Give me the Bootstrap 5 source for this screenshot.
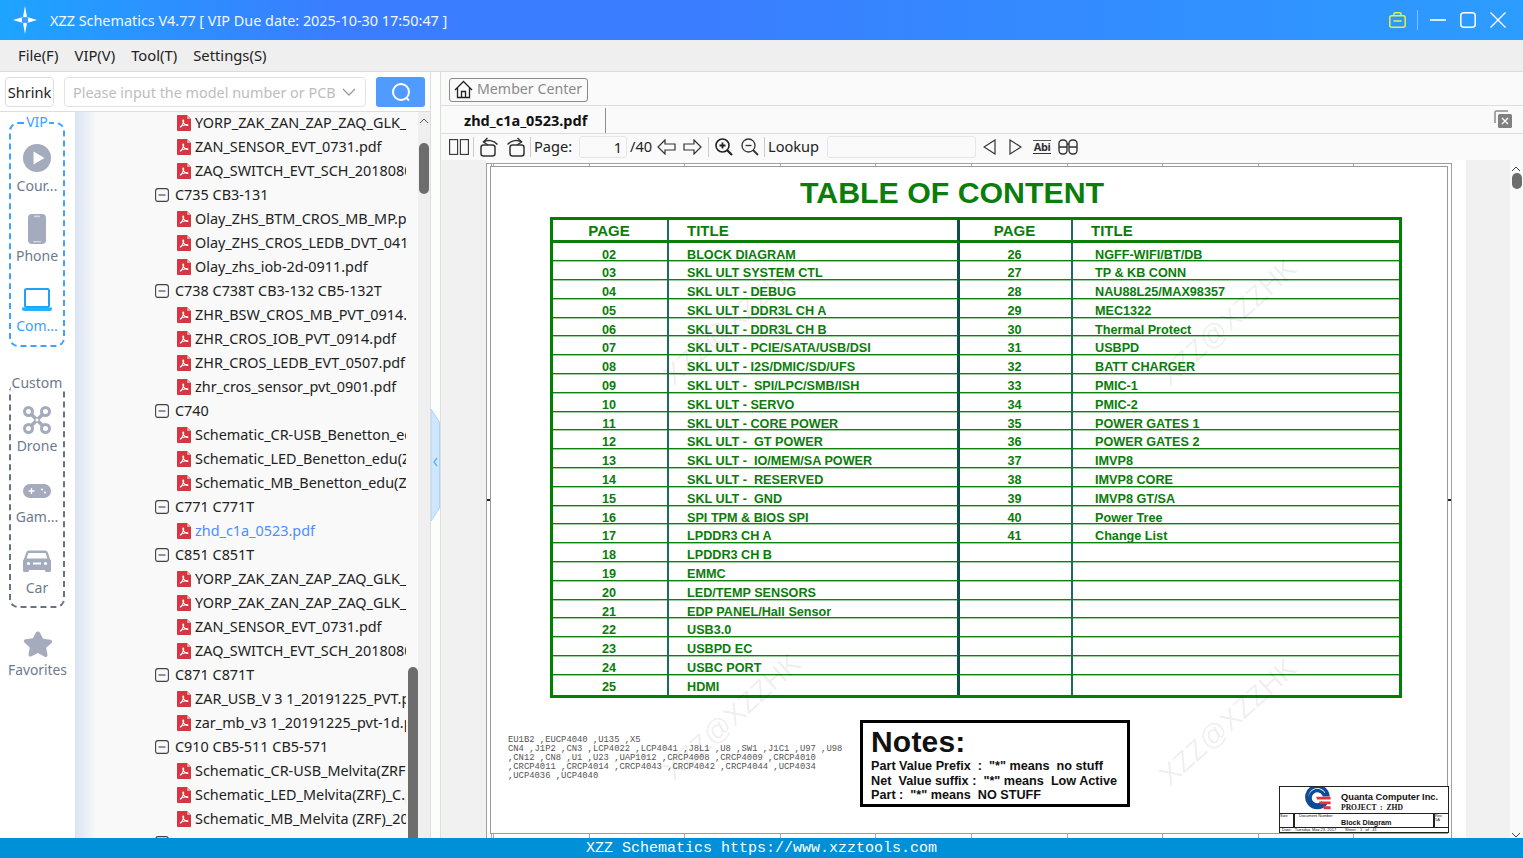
<!DOCTYPE html>
<html lang="en">
<head>
<meta charset="utf-8">
<title>XZZ Schematics</title>
<link href="https://cdn.jsdelivr.net/npm/bootstrap@5.3.0/dist/css/bootstrap.min.css" rel="stylesheet">
<style>
html,body{height:100%;overflow:hidden}
body{font-family:"Noto Sans","Noto Sans CJK SC",sans-serif;font-size:14.4px;color:#222;background:#fff;line-height:1.2}
.shell{width:1523px;height:858px}
.ttlbar{height:40px;flex:none;background:linear-gradient(90deg,#1ea4ff 0,#3a7dff 22%,#3a7dff 45%,#2c9cff 100%);color:#fff}
.ttl-logo{width:30px;height:30px;margin:0 10px 0 10px}
.ttl-text{font-size:14.4px;color:#f2f7ff;padding-top:1px}
.ttl-act{gap:14px;padding-right:17px}
.ttl-sep{width:1px;height:20px;background:#7cc2ff;margin:0 -2px 0 -3px}
.menubar{height:32px;flex:none;background:#efefef;border-bottom:1px solid #dcdcdc;padding:1px 0 0 18px;gap:16px;font-size:14.8px}
.work{height:766px;flex:none}
.leftcol{width:431px;flex:none;border-right:1px solid #ddd}
.seekrow{height:40px;flex:none;border-bottom:1px solid #ddd;padding:5px 5px 4px 5px;background:#fff}
.shrink-btn{width:49px;height:30px;padding:1px 0 0;font-size:14.6px;color:#222;background:#fff;border:1px solid #ddd;border-radius:4px;margin-right:10px}
.seekbox{width:302px;height:30px;border:1px solid #e2e2e2;border-radius:4px;margin-right:10px;padding-right:9px;background:#fff}
.seekbox .form-control{border:0;padding:0 0 0 8px;font-size:14.4px;height:28px;box-shadow:none;background:transparent}
.seekbox .form-control::placeholder{color:#bdbdbd;opacity:1}
.seek-go{width:49px;height:30px;padding:0;background:#4f9bff;border:0;border-radius:3px}
.lower{height:726px;position:relative}
.rail{width:75px;flex:none;background:#fff;padding:10px 10px 0 9px}
.railbox{height:225px;border:2px dashed #3fa2ff;border-radius:9px;position:relative;padding-top:20px}
.railbox.cust{border-color:#6a7180;margin-top:36px}
.railbox-tag{position:absolute;top:-10px;left:50%;transform:translateX(-50%);background:#fff;font-size:14px;color:#3f9dff;line-height:16px;padding:0 1px;white-space:nowrap}
.cust .railbox-tag{color:#6e7687}
.railitem{height:70px;color:#6e7a8e;font-size:14px;line-height:18px;text-align:center;white-space:nowrap}
.railitem svg{display:block;margin:0 auto 5px}
.railitem.on{color:#3f9dff}
.cust .railitem svg{margin:1px auto 3px}
.railitem .phone-ic{margin:0 auto 3px}
.railitem .lap-ic{margin:4px auto 5px}
.railitem .star-ic{margin:0 auto 3px}
.railfav{margin:22px -10px 0 -9px;height:70px;font-size:13.8px}
.treewrap{width:343px;flex:none;background:linear-gradient(90deg,#dbe4f4 0,#f9f9f9 22px);overflow:hidden}
.treescroll{width:12px;flex:none;background:#efefef}
.trow{height:24px;display:flex;align-items:center;line-height:24px;white-space:nowrap}
.trow.grp{padding-left:80px}
.trow.fil{padding-left:102px}
.trow.first{margin-top:-1px}
.trow svg{flex:none}
.trow.grp svg{margin-right:6px}
.trow.fil svg{margin-right:4px}
.tname{width:211px;overflow:hidden}
.tname.hit{color:#4d8dff}
.sb-thumb{position:absolute;width:10px;border-radius:5px;background:#6d6d6d}
.sb-a{left:419px;top:31px;height:51px}
.sb-b{left:408px;top:555px;height:171px;border-radius:5px 5px 0 0}
.sb-c{left:2px;top:13px;height:16px}
.sb-up{position:absolute;left:419px;top:6px}
.splitbar{flex:none;background:#fbfefb;position:relative;border-right:1px solid #ddd;width:10px}
.split-hdl{position:absolute;left:0;top:337px}
.rightcol{width:1082px;flex:none;background:#fafafa}
.memrow{height:34px;flex:none;border-bottom:1px solid #ddd;padding:6px 0 0 8px}
.mem-btn{height:24px;width:139px;padding:0 0 2px 4px;border:1px solid #8a8a8a;border-radius:3px;color:#8a8a8a;font-size:14.2px;background:#fafafa;line-height:20px;white-space:nowrap}
.tabrow{height:28px;flex:none;border-bottom:1px solid #ddd;position:relative}
.tabitem{width:165px;height:25px;margin-top:2px;border-right:1px solid #8e8e8e;padding-left:23px;font-weight:700;font-size:14.5px;line-height:24px;color:#111}
.tab-x{margin:0 11px 0 auto}
.toolrow{height:26px;flex:none;padding-left:8px;font-size:14.6px}
.tsep{width:1px;height:20px;background:#ccc}
.tfield{height:22px;border:1px solid #e6e6e6;border-radius:3px;background:#fafafa;text-align:right;padding-right:4px;line-height:20px}
.abi-ic{margin-left:11px;width:18px;border-top:1px solid #555;border-bottom:1px solid #333;font-size:11px;line-height:12px;color:#333;text-align:center;font-weight:700;letter-spacing:-.5px}
.viewarea{height:678px;flex:none;background:#f1f1f1}
.sheetscroll{width:13px;flex:none;background:#fafafa;position:relative}
.sheet{width:980px;height:678px;margin:0 44px 0 45px;background:#fff;padding-top:3px;overflow:hidden;flex:none}
.frm-o{width:966px;height:680px;border:solid #a0a0a0;border-width:1px 1px 0 1px;padding:0 3px;background:#fff}
.tick-t{height:2px;background:repeating-linear-gradient(90deg,#a8a8a8 0 1px,transparent 1px 95.6px) 3px 0}
.tick-b{height:6px;background:repeating-linear-gradient(90deg,#a8a8a8 0 1px,transparent 1px 95.6px) 3px 0}
.frm-i{height:668px;border:1px solid #9a9a9a;position:relative;background:#fff;font-family:"Liberation Sans",Arial,sans-serif}
.edge-mk{position:absolute;top:332px;width:3px;height:2px;background:#222}
.edge-l{left:-4px}
.edge-r{right:-4px}
.wmk{position:absolute;transform:translate(-50%,-50%) rotate(-42deg);font-size:28px;color:rgba(0,0,0,.07);white-space:nowrap;line-height:1;pointer-events:none}
.toc-head{height:50px;margin-left:309px;font-size:30.3px;font-weight:700;color:#0a7d0a;line-height:52px;white-space:nowrap}
.toc{margin-left:59px;width:852px;border:3px solid #008000;display:grid;grid-template-columns:116px 291px 113px 326px;grid-template-rows:22.5px repeat(23,18.8px) 20.5px;color:#0a7d0a;font-weight:700;font-size:12.65px}
.toc>div{border-bottom:1px solid #0c820c;box-shadow:0 1px 0 rgba(12,130,12,.4);line-height:24px;white-space:pre;border-right:2px solid #1f6a5c;min-height:0}
.toc>div:nth-child(4n+2){border-right:3px solid #0f4f4a}
.toc>div:nth-child(4n){border-right:0}
.toc>div:nth-child(n+97){border-bottom:0;box-shadow:none}
.toc>.th{font-size:15px;line-height:22px;border-bottom:3px solid #0a7d0a;box-shadow:none}
.cn{text-align:center;padding-right:2px}
.t1{padding-left:18px}
.t2{padding-left:22px}
.toc>.t2h{padding-left:18px}
.sheetfoot{height:113px;margin-top:22px}
.partlist{width:369px;padding:16px 0 0 17px;margin:0;font-family:"Liberation Mono","DejaVu Sans Mono",monospace;font-size:8.85px;line-height:9px;color:#555;white-space:pre;flex:none;background:transparent;overflow:visible}
.notebox{width:270px;height:87px;border:3px solid #000;padding:2px 0 0 8px;color:#111;font-weight:700;font-size:12.65px;line-height:14.3px;white-space:pre;flex:none}
.notebox-h{font-size:30px;line-height:34px;letter-spacing:.2px}
.titleblk{width:170px;height:47px;border:1px solid #222;margin:auto -2px 0 auto;font-size:8px;color:#111;flex:none;background:#fff;line-height:1}
.tb-top{height:27px;border-bottom:1px solid #222;padding-left:20px}
.tb-co{font-weight:700;font-size:9.3px;line-height:12px;padding-top:4px;white-space:nowrap}
.tb-prj{font-family:"Liberation Serif",serif;font-weight:700;font-size:7.6px;line-height:10px;white-space:pre}
.tb-mid{height:14px;border-bottom:1px solid #222}
.tb-sz{width:15px;border-right:2px solid #222;font-size:4px}
.tb-doc{flex:1;font-size:4px;padding-left:4px;position:relative}
.tb-doc b{display:block;font-size:7.2px;margin:1px 0 0 42px}
.tb-rev{width:15px;border-left:2px solid #222;font-size:4px}
.tb-bot{font-size:4px;height:3px;white-space:pre;overflow:hidden;padding-left:2px}
.statusbar{height:20px;flex:none;background:#0090d8;color:#fff;font-family:"Liberation Mono","DejaVu Sans Mono",monospace;font-size:15px;line-height:21px;text-align:center}
</style>
</head>
<body>
<svg width="0" height="0" class="position-absolute">
<symbol id="pdf" viewBox="0 0 14 16"><path d="M1 0h9l4 4v11a1 1 0 0 1-1 1H1a1 1 0 0 1-1-1V1a1 1 0 0 1 1-1z" fill="#d8363e"/><path d="M10 0l4 4h-3.200a.8.8 0 0 1-.8-.8z" fill="#f0a0a4"/><path d="M3 12.300c1.500-.8 2.800-2.800 3.500-5.200.2-1 .2-2-.3-2-.5 0-.5 1.200 0 2.200.7 1.300 2 2.600 3.200 3 .9.300 1.600.1 1.500-.3-.1-.4-1.200-.5-2.400-.3-2 .3-4 1.100-5.500 2.600z" fill="none" stroke="#fff" stroke-width="1.100"/></symbol>
<symbol id="grpbox" viewBox="0 0 14 14"><rect x=".6" y=".6" width="12.800" height="12.800" rx="2.500" fill="none" stroke="#3f4248" stroke-width="1.100"/><path d="M3.500 7h7" stroke="#3f4248" stroke-width="1.100"/></symbol>
</svg>
<div class="shell d-flex flex-column">
  <div class="ttlbar d-flex align-items-center">
    <svg class="ttl-logo" viewBox="0 0 30 30"><path d="M15 1l2 11 10 3-10 3-2 11-2-11-10-3 10-3z" fill="#fff"/><circle cx="15" cy="15" r="3.500" fill="#3a9dff"/><circle cx="11" cy="15" r="1.200" fill="#fff"/><circle cx="19" cy="15" r="1.200" fill="#fff"/><circle cx="15" cy="11" r="1.200" fill="#fff"/><circle cx="15" cy="19" r="1.200" fill="#fff"/></svg>
    <span class="ttl-text">XZZ Schematics V4.77 [ VIP Due date: 2025-10-30 17:50:47 ]</span>
    <div class="ttl-act d-flex align-items-center ms-auto">
      <svg width="17" height="16" viewBox="0 0 17 16" fill="none" stroke="#e3ef4a" stroke-width="1.500"><rect x=".8" y="3.700" width="15.400" height="11.500" rx="2"/><path d="M5 3.500V2a1.200 1.200 0 0 1 1.200-1.200h4.600A1.200 1.200 0 0 1 12 2v1.500M4.500 9h8"/></svg>
      <span class="ttl-sep"></span>
      <svg width="16" height="16" viewBox="0 0 16 16"><path d="M0 8h16" stroke="#fff" stroke-width="1.600"/></svg>
      <svg width="16" height="16" viewBox="0 0 16 16" fill="none"><rect x=".8" y=".8" width="14.400" height="14.400" rx="3" stroke="#fff" stroke-width="1.500"/></svg>
      <svg width="16" height="16" viewBox="0 0 16 16"><path d="M.5.500l15 15M15.500.500l-15 15" stroke="#fff" stroke-width="1.400"/></svg>
    </div>
  </div>
  <div class="menubar d-flex align-items-center"><span>File(F)</span><span>VIP(V)</span><span>Tool(T)</span><span>Settings(S)</span></div>
  <div class="work d-flex">
    <div class="leftcol d-flex flex-column">
      <div class="seekrow d-flex align-items-start">
        <button class="btn shrink-btn" type="button">Shrink</button>
        <div class="seekbox d-flex align-items-center">
          <input class="form-control" type="text" placeholder="Please input the model number or PCB">
          <svg class="flex-shrink-0" width="14" height="8" viewBox="0 0 14 8"><path d="M1 1l6 6 6-6" fill="none" stroke="#9a9a9a" stroke-width="1.300"/></svg>
        </div>
        <button class="btn seek-go d-flex align-items-center justify-content-center" type="button" aria-label="Search"><svg width="22" height="22" viewBox="0 0 22 22" fill="none" stroke="#fff" stroke-width="2"><circle cx="11" cy="11" r="8"/><path d="M16.500 17l2.500 2.500"/></svg></button>
      </div>
      <div class="lower d-flex">
        <div class="rail">
          <div class="railbox">
            <span class="railbox-tag">VIP</span>
            <div class="railitem"><svg width="28" height="28" viewBox="0 0 28 28"><circle cx="14" cy="14" r="14" fill="#a4abbd"/><path d="M10.500 7.500l11 6.500-11 6.500z" fill="#fff"/></svg>Cour...</div>
            <div class="railitem"><svg class="phone-ic" width="18" height="30" viewBox="0 0 18 30"><rect width="18" height="30" rx="4" fill="#a4abbd"/><rect x="6" y="1.500" width="6" height="1.800" rx=".9" fill="#d4d8e2"/><rect x="5" y="27" width="8" height="1.300" fill="#d4d8e2"/></svg>Phone</div>
            <div class="railitem on"><svg class="lap-ic" width="30" height="24" viewBox="0 0 30 24"><rect x="3" y="1" width="24" height="18" rx="1.500" fill="none" stroke="#21a0f8" stroke-width="2"/><path d="M0 19.500h30v1.500a2 2 0 0 1-2 2H2a2 2 0 0 1-2-2z" fill="#21b4ff"/></svg>Com...</div>
          </div>
          <div class="railbox cust">
            <span class="railbox-tag">Custom</span>
            <div class="railitem"><svg width="28" height="28" viewBox="0 0 28 28" fill="none" stroke="#a4abbd"><circle cx="5.500" cy="5.500" r="4" stroke-width="3"/><circle cx="22.500" cy="5.500" r="4" stroke-width="3"/><circle cx="5.500" cy="22.500" r="4" stroke-width="3"/><circle cx="22.500" cy="22.500" r="4" stroke-width="3"/><path d="M8 8l12 12M20 8L8 20" stroke-width="3.500"/><circle cx="14" cy="14" r="2" fill="#fff" stroke-width="1"/></svg>Drone</div>
            <div class="railitem"><svg width="28" height="28" viewBox="0 0 28 28"><rect y="7" width="28" height="14" rx="7" fill="#a4abbd"/><path d="M5.500 14h6M8.500 11v6" stroke="#fff" stroke-width="1.300"/><circle cx="19" cy="12.500" r="1" fill="#fff"/><circle cx="22" cy="15.500" r="1" fill="#fff"/></svg>Gam...</div>
            <div class="railitem"><svg width="28" height="28" viewBox="0 0 28 28"><path d="M6 2.500h16a3 3 0 0 1 2.800 2L27 11a3 3 0 0 1 1 2v9.500a1.500 1.500 0 0 1-1.500 1.500h-3a1.500 1.500 0 0 1-1.500-1.500V22H6v.5A1.500 1.500 0 0 1 4.500 24h-3A1.500 1.500 0 0 1 0 22.500V13a3 3 0 0 1 1-2l2.200-6.500a3 3 0 0 1 2.800-2z" fill="#a4abbd"/><path d="M5.500 5h17l2 5.500h-21z" fill="#fff"/><circle cx="5.500" cy="15.500" r="1.600" fill="#fff"/><circle cx="22.500" cy="15.500" r="1.600" fill="#fff"/><rect x="10" y="14.500" width="8" height="2" fill="#fff"/></svg>Car</div>
          </div>
          <div class="railitem railfav"><svg class="star-ic" width="30" height="28" viewBox="0 0 30 28"><path d="M15 1.500a2 2 0 0 1 1.800 1.100l3.300 6.800 7.400 1a2 2 0 0 1 1.100 3.400l-5.400 5.200 1.300 7.400a2 2 0 0 1-2.900 2.100L15 24.500l-6.600 3.500a2 2 0 0 1-2.900-2.100l1.300-7.400-5.400-5.200a2 2 0 0 1 1.100-3.400l7.400-1 3.300-6.800A2 2 0 0 1 15 1.500z" fill="#a4abbd" transform="scale(1 .94)"/></svg>Favorites</div>
        </div>
        <div class="treewrap">
          <div class="trow fil first"><svg width="14" height="16"><use href="#pdf"/></svg><div class="tname">YORP_ZAK_ZAN_ZAP_ZAQ_GLK_MB.pdf</div></div>
          <div class="trow fil"><svg width="14" height="16"><use href="#pdf"/></svg><div class="tname">ZAN_SENSOR_EVT_0731.pdf</div></div>
          <div class="trow fil"><svg width="14" height="16"><use href="#pdf"/></svg><div class="tname">ZAQ_SWITCH_EVT_SCH_20180806.pdf</div></div>
          <div class="trow grp"><svg width="14" height="14"><use href="#grpbox"/></svg><div>C735 CB3-131</div></div>
          <div class="trow fil"><svg width="14" height="16"><use href="#pdf"/></svg><div class="tname">Olay_ZHS_BTM_CROS_MB_MP.pdf</div></div>
          <div class="trow fil"><svg width="14" height="16"><use href="#pdf"/></svg><div class="tname">Olay_ZHS_CROS_LEDB_DVT_0412.pdf</div></div>
          <div class="trow fil"><svg width="14" height="16"><use href="#pdf"/></svg><div class="tname">Olay_zhs_iob-2d-0911.pdf</div></div>
          <div class="trow grp"><svg width="14" height="14"><use href="#grpbox"/></svg><div>C738 C738T CB3-132 CB5-132T</div></div>
          <div class="trow fil"><svg width="14" height="16"><use href="#pdf"/></svg><div class="tname">ZHR_BSW_CROS_MB_PVT_0914.pdf</div></div>
          <div class="trow fil"><svg width="14" height="16"><use href="#pdf"/></svg><div class="tname">ZHR_CROS_IOB_PVT_0914.pdf</div></div>
          <div class="trow fil"><svg width="14" height="16"><use href="#pdf"/></svg><div class="tname">ZHR_CROS_LEDB_EVT_0507.pdf</div></div>
          <div class="trow fil"><svg width="14" height="16"><use href="#pdf"/></svg><div class="tname">zhr_cros_sensor_pvt_0901.pdf</div></div>
          <div class="trow grp"><svg width="14" height="14"><use href="#grpbox"/></svg><div>C740</div></div>
          <div class="trow fil"><svg width="14" height="16"><use href="#pdf"/></svg><div class="tname">Schematic_CR-USB_Benetton_edu(ZRF).pdf</div></div>
          <div class="trow fil"><svg width="14" height="16"><use href="#pdf"/></svg><div class="tname">Schematic_LED_Benetton_edu(ZRF).pdf</div></div>
          <div class="trow fil"><svg width="14" height="16"><use href="#pdf"/></svg><div class="tname">Schematic_MB_Benetton_edu(ZRF).pdf</div></div>
          <div class="trow grp"><svg width="14" height="14"><use href="#grpbox"/></svg><div>C771 C771T</div></div>
          <div class="trow fil"><svg width="14" height="16"><use href="#pdf"/></svg><div class="tname hit">zhd_c1a_0523.pdf</div></div>
          <div class="trow grp"><svg width="14" height="14"><use href="#grpbox"/></svg><div>C851 C851T</div></div>
          <div class="trow fil"><svg width="14" height="16"><use href="#pdf"/></svg><div class="tname">YORP_ZAK_ZAN_ZAP_ZAQ_GLK_MB.pdf</div></div>
          <div class="trow fil"><svg width="14" height="16"><use href="#pdf"/></svg><div class="tname">YORP_ZAK_ZAN_ZAP_ZAQ_GLK_IO.pdf</div></div>
          <div class="trow fil"><svg width="14" height="16"><use href="#pdf"/></svg><div class="tname">ZAN_SENSOR_EVT_0731.pdf</div></div>
          <div class="trow fil"><svg width="14" height="16"><use href="#pdf"/></svg><div class="tname">ZAQ_SWITCH_EVT_SCH_20180806.pdf</div></div>
          <div class="trow grp"><svg width="14" height="14"><use href="#grpbox"/></svg><div>C871 C871T</div></div>
          <div class="trow fil"><svg width="14" height="16"><use href="#pdf"/></svg><div class="tname">ZAR_USB_V 3 1_20191225_PVT.pdf</div></div>
          <div class="trow fil"><svg width="14" height="16"><use href="#pdf"/></svg><div class="tname">zar_mb_v3 1_20191225_pvt-1d.pdf</div></div>
          <div class="trow grp"><svg width="14" height="14"><use href="#grpbox"/></svg><div>C910 CB5-511 CB5-571</div></div>
          <div class="trow fil"><svg width="14" height="16"><use href="#pdf"/></svg><div class="tname">Schematic_CR-USB_Melvita(ZRF).pdf</div></div>
          <div class="trow fil"><svg width="14" height="16"><use href="#pdf"/></svg><div class="tname">Schematic_LED_Melvita(ZRF)_C.pdf</div></div>
          <div class="trow fil"><svg width="14" height="16"><use href="#pdf"/></svg><div class="tname">Schematic_MB_Melvita (ZRF)_2017.pdf</div></div>
          <div class="trow grp"><svg width="14" height="14"><use href="#grpbox"/></svg><div>C930 CB5-471</div></div>
        </div>
        <div class="treescroll"></div>
        <svg class="sb-up" width="10" height="6" viewBox="0 0 10 6"><path d="M1 5l4-4 4 4" fill="none" stroke="#555" stroke-width="1"/></svg>
        <div class="sb-thumb sb-a"></div>
        <div class="sb-thumb sb-b"></div>
      </div>
    </div>
    <div class="splitbar"><svg class="split-hdl" width="9" height="112" viewBox="0 0 9 112"><path d="M0 0l8.500 13v86L0 112z" fill="#cfe6ff" stroke="#a8d3ff" stroke-width="1"/><path d="M6 49l-3 4 3 4" fill="none" stroke="#62aefc" stroke-width="1.300"/></svg></div>
    <div class="rightcol d-flex flex-column">
      <div class="memrow"><button class="btn mem-btn d-flex align-items-center gap-1" type="button"><svg class="flex-shrink-0" width="19" height="19" viewBox="0 0 19 19" fill="none" stroke="#222" stroke-width="1.300"><path d="M1 10L9.500 1.500 18 10M3.500 8v9.500h12V8M7.500 17.500v-6h4v6"/></svg>Member Center</button></div>
      <div class="tabrow d-flex align-items-start">
        <div class="tabitem">zhd_c1a_0523.pdf</div>
        <svg class="tab-x mt-1" width="18" height="18" viewBox="0 0 18 18"><path d="M1 13V2.500A1.500 1.500 0 0 1 2.500 1H14" fill="none" stroke="#8a8a8a" stroke-width="1.500"/><rect x="4" y="4" width="14" height="14" rx="1.500" fill="#808080"/><path d="M8 8l6 6M14 8l-6 6" stroke="#fff" stroke-width="1.400"/></svg>
      </div>
      <div class="toolrow d-flex align-items-center">
        <svg width="20" height="16" viewBox="0 0 20 16" fill="none" stroke="#333" stroke-width="1.100"><rect x=".6" y=".6" width="8" height="14.800"/><rect x="11.400" y=".6" width="8" height="14.800"/></svg>
        <span class="tsep ms-1" style="margin-right:6px"></span>
        <svg width="19" height="20" viewBox="0 0 19 20" fill="none" stroke="#333" stroke-width="1.500"><rect x="1" y="8" width="14" height="11" rx="2.500"/><path d="M3.500 5C7.500 2.500 13.500 3 17.500 7.500"/><path d="M7.500 1L3.500 5l4.500 3"/></svg>
        <svg style="margin-left:7px" width="19" height="20" viewBox="0 0 19 20" fill="none" stroke="#333" stroke-width="1.500"><rect x="4" y="8" width="14" height="11" rx="2.500"/><path d="M15.500 5C11.500 2.500 5.500 3 1.500 7.500"/><path d="M11.500 1l4 4-4.500 3"/></svg>
        <span class="tsep" style="margin:0 3px 0 5px"></span>
        <span style="width:45px">Page:</span>
        <div class="tfield" style="width:48px">1</div>
        <span style="width:27px;padding-left:3px">/40</span>
        <svg style="margin-left:3px" width="19" height="16" viewBox="0 0 19 16" fill="none" stroke="#333" stroke-width="1.200"><path d="M8 1L1 8l7 7v-4h10V5H8z"/></svg>
        <svg style="margin-left:7px" width="19" height="16" viewBox="0 0 19 16" fill="none" stroke="#333" stroke-width="1.200"><path d="M11 1l7 7-7 7v-4H1V5h10z"/></svg>
        <span class="tsep" style="margin:0 6px 0 6px"></span>
        <svg width="18" height="18" viewBox="0 0 18 18" fill="none" stroke="#222" stroke-width="1.600"><circle cx="7.500" cy="7.500" r="6.500"/><path d="M12 12l5 5" stroke-width="2.200"/><path d="M4.500 7.500h6M7.500 4.500v6" stroke-width="1.800"/></svg>
        <svg style="margin-left:8px" width="18" height="18" viewBox="0 0 18 18" fill="none" stroke="#333" stroke-width="1.300"><circle cx="7.500" cy="7.500" r="6.500"/><path d="M12 12l5 5" stroke-width="1.800"/><path d="M4.500 7.500h6"/></svg>
        <span class="tsep" style="margin:0 3px 0 5px"></span>
        <span style="width:59px">Lookup</span>
        <div class="tfield" style="width:149px"></div>
        <svg style="margin-left:7px" width="13" height="16" viewBox="0 0 13 16" fill="none" stroke="#333" stroke-width="1.200"><path d="M12 1L1 8l11 7z"/></svg>
        <svg style="margin-left:13px" width="13" height="16" viewBox="0 0 13 16" fill="none" stroke="#333" stroke-width="1.200"><path d="M1 1l11 7-11 7z"/></svg>
        <span class="abi-ic">Abi</span>
        <svg style="margin-left:7px" width="20" height="16" viewBox="0 0 20 16" fill="none" stroke="#333" stroke-width="1.400"><rect x="1" y="1" width="8" height="14" rx="3.500"/><rect x="11" y="1" width="8" height="14" rx="3.500"/><path d="M1 8h8M11 8h8M9 5h2"/></svg>
      </div>
      <div class="viewarea d-flex">
        <div class="flex-grow-1 d-flex" style="min-width:0">
          <div class="sheet">
            <div class="frm-o">
              <div class="tick-t"></div>
              <div class="frm-i">
                <span class="edge-mk edge-l"></span><span class="edge-mk edge-r"></span>
                <span class="wmk" style="left:241px;top:155px">XZZ@XZZHK</span>
                <span class="wmk" style="left:737px;top:155px">XZZ@XZZHK</span>
                <span class="wmk" style="left:241px;top:550px">XZZ@XZZHK</span>
                <span class="wmk" style="left:737px;top:555px">XZZ@XZZHK</span>
                <div class="toc-head">TABLE OF CONTENT</div>
                <div class="toc">
                  <div class="th cn">PAGE</div><div class="th t1">TITLE</div><div class="th cn">PAGE</div><div class="th t2h">TITLE</div>
                  <div class="cn">02</div><div class="t1">BLOCK DIAGRAM</div><div class="cn">26</div><div class="t2">NGFF-WIFI/BT/DB</div>
                  <div class="cn">03</div><div class="t1">SKL ULT SYSTEM CTL</div><div class="cn">27</div><div class="t2">TP &amp; KB CONN</div>
                  <div class="cn">04</div><div class="t1">SKL ULT - DEBUG</div><div class="cn">28</div><div class="t2">NAU88L25/MAX98357</div>
                  <div class="cn">05</div><div class="t1">SKL ULT - DDR3L CH A</div><div class="cn">29</div><div class="t2">MEC1322</div>
                  <div class="cn">06</div><div class="t1">SKL ULT - DDR3L CH B</div><div class="cn">30</div><div class="t2">Thermal Protect</div>
                  <div class="cn">07</div><div class="t1">SKL ULT - PCIE/SATA/USB/DSI</div><div class="cn">31</div><div class="t2">USBPD</div>
                  <div class="cn">08</div><div class="t1">SKL ULT - I2S/DMIC/SD/UFS</div><div class="cn">32</div><div class="t2">BATT CHARGER</div>
                  <div class="cn">09</div><div class="t1">SKL ULT -  SPI/LPC/SMB/ISH</div><div class="cn">33</div><div class="t2">PMIC-1</div>
                  <div class="cn">10</div><div class="t1">SKL ULT - SERVO</div><div class="cn">34</div><div class="t2">PMIC-2</div>
                  <div class="cn">11</div><div class="t1">SKL ULT - CORE POWER</div><div class="cn">35</div><div class="t2">POWER GATES 1</div>
                  <div class="cn">12</div><div class="t1">SKL ULT -  GT POWER</div><div class="cn">36</div><div class="t2">POWER GATES 2</div>
                  <div class="cn">13</div><div class="t1">SKL ULT -  IO/MEM/SA POWER</div><div class="cn">37</div><div class="t2">IMVP8</div>
                  <div class="cn">14</div><div class="t1">SKL ULT -  RESERVED</div><div class="cn">38</div><div class="t2">IMVP8 CORE</div>
                  <div class="cn">15</div><div class="t1">SKL ULT -  GND</div><div class="cn">39</div><div class="t2">IMVP8 GT/SA</div>
                  <div class="cn">16</div><div class="t1">SPI TPM &amp; BIOS SPI</div><div class="cn">40</div><div class="t2">Power Tree</div>
                  <div class="cn">17</div><div class="t1">LPDDR3 CH A</div><div class="cn">41</div><div class="t2">Change List</div>
                  <div class="cn">18</div><div class="t1">LPDDR3 CH B</div><div class="cn"></div><div class="t2"></div>
                  <div class="cn">19</div><div class="t1">EMMC</div><div class="cn"></div><div class="t2"></div>
                  <div class="cn">20</div><div class="t1">LED/TEMP SENSORS</div><div class="cn"></div><div class="t2"></div>
                  <div class="cn">21</div><div class="t1">EDP PANEL/Hall Sensor</div><div class="cn"></div><div class="t2"></div>
                  <div class="cn">22</div><div class="t1">USB3.0</div><div class="cn"></div><div class="t2"></div>
                  <div class="cn">23</div><div class="t1">USBPD EC</div><div class="cn"></div><div class="t2"></div>
                  <div class="cn">24</div><div class="t1">USBC PORT</div><div class="cn"></div><div class="t2"></div>
                  <div class="cn">25</div><div class="t1">HDMI</div><div class="cn"></div><div class="t2"></div>
                </div>
                <div class="sheetfoot d-flex">
                  <pre class="partlist">EU1B2 ,EUCP4040 ,U135 ,X5
CN4 ,J1P2 ,CN3 ,LCP4022 ,LCP4041 ,J8L1 ,U8 ,SW1 ,J1C1 ,U97 ,U98
,CN12 ,CN8 ,U1 ,U23 ,UAP1012 ,CRCP4008 ,CRCP4009 ,CRCP4010
,CRCP4011 ,CRCP4014 ,CRCP4043 ,CRCP4042 ,CRCP4044 ,UCP4034
,UCP4036 ,UCP4040</pre>
                  <div class="notebox"><div class="notebox-h">Notes:</div>Part Value Prefix  :  "*" means  no stuff
Net  Value suffix :  "*" means  Low Active
Part :  "*" means  NO STUFF</div>
                  <div class="titleblk">
                    <div class="tb-top d-flex">
                      <svg class="flex-shrink-0" width="41" height="26" viewBox="0 0 41 27"><path d="M26 17a11 11 0 1 1 2-9h-4a7.500 7.500 0 1 0-1 8" fill="none" stroke="#0f4a96" stroke-width="3.500"/><path d="M16 10h15v3H17zM19 15h12v3H20zM23 20h8v3h-7z" fill="#e0353f"/></svg>
                      <div><div class="tb-co">Quanta Computer Inc.</div><div class="tb-prj">PROJECT  :  ZHD</div></div>
                    </div>
                    <div class="tb-mid d-flex"><div class="tb-sz">Size</div><div class="tb-doc">Document Number<b>Block Diagram</b></div><div class="tb-rev">Rev<br>5A</div></div>
                    <div class="tb-bot">Date:   Tuesday, May 23, 2017        Sheet    1   of   41</div>
                  </div>
                </div>
              </div>
              <div class="tick-b"></div>
            </div>
          </div>
        </div>
        <div class="sheetscroll">
          <svg class="position-absolute" style="left:1px;top:6px" width="10" height="6" viewBox="0 0 10 6"><path d="M1 5l4-4 4 4" fill="none" stroke="#444" stroke-width="1"/></svg>
          <div class="sb-thumb sb-c"></div>
          <svg class="position-absolute" style="left:1px;bottom:0" width="10" height="6" viewBox="0 0 10 6"><path d="M1 1l4 4 4-4" fill="none" stroke="#444" stroke-width="1"/></svg>
        </div>
      </div>
    </div>
  </div>
  <div class="statusbar">XZZ Schematics https://www.xzztools.com</div>
</div>
<script src="https://cdn.jsdelivr.net/npm/bootstrap@5.3.0/dist/js/bootstrap.bundle.min.js"></script>
</body>
</html>
